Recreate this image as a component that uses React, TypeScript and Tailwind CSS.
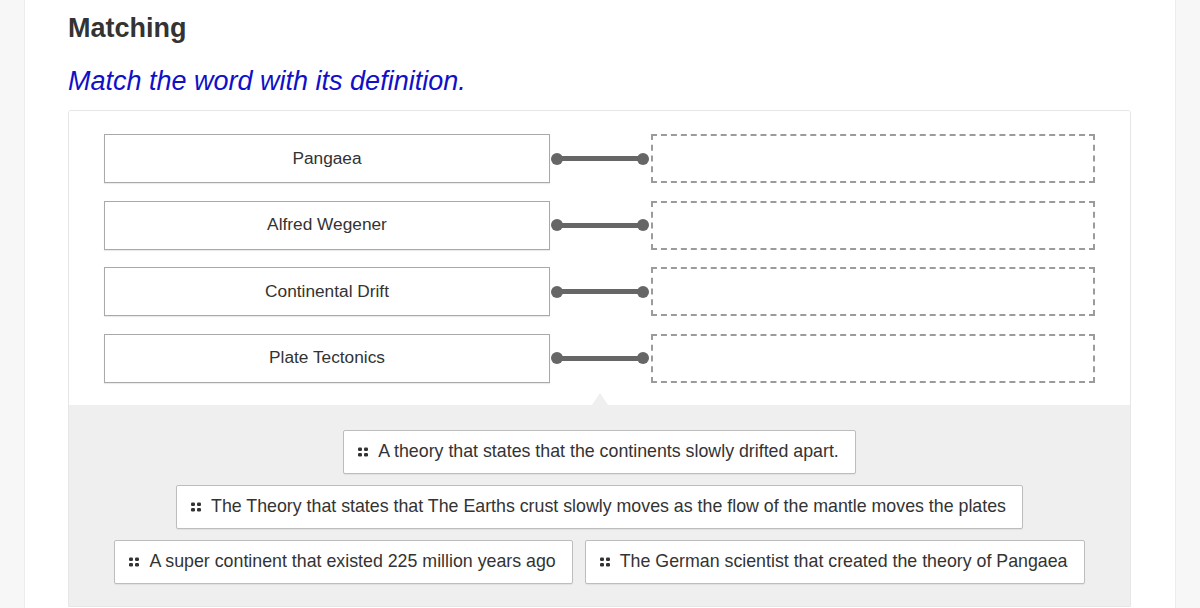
import React from "react";

const words = ["Pangaea", "Alfred Wegener", "Continental Drift", "Plate Tectonics"];

const definitions = [
  "A theory that states that the continents slowly drifted apart.",
  "The Theory that states that The Earths crust slowly moves as the flow of the mantle moves the plates",
  "A super continent that existed 225 million years ago",
  "The German scientist that created the theory of Pangaea",
];

const Grip = () => (
  <svg width="10" height="10" viewBox="0 0 10 10" aria-hidden="true" className="shrink-0">
    <rect x="0" y="0.5" width="4" height="3.5" rx="1.2" fill="#333" />
    <rect x="6" y="0.5" width="4" height="3.5" rx="1.2" fill="#333" />
    <rect x="0" y="6" width="4" height="3.5" rx="1.2" fill="#333" />
    <rect x="6" y="6" width="4" height="3.5" rx="1.2" fill="#333" />
  </svg>
);

const MatchRow = ({ word }: { word: string }) => (
  <div className="flex items-center h-[49px]">
    <div className="flex h-full w-[446px] shrink-0 items-center justify-center border border-[#a9a9a9] bg-white text-[17.3px] text-[#333] shadow-[0_1px_1px_rgba(0,0,0,0.08)]">
      {word}
    </div>
    <div className="relative flex w-[101px] shrink-0 items-center pl-[1px] pr-[2px]">
      <span className="h-[12px] w-[12px] shrink-0 rounded-full bg-[#666]" />
      <span className="-mx-[2px] h-[5px] flex-1 bg-[#666]" />
      <span className="h-[12px] w-[12px] shrink-0 rounded-full bg-[#666]" />
    </div>
    <div className="h-full w-[444px] shrink-0 border-2 border-dashed border-[#9b9b9b]" />
  </div>
);

export default function App() {
  return (
    <div className="flex min-h-[608px] w-full bg-[#f7f7f7] font-['Liberation_Sans',Arial,sans-serif]">
      <div className="w-[25px] shrink-0 border-r border-[#ececec]" />
      <main className="w-[1150px] shrink-0 bg-white pl-[43px] pr-[44px] pt-[12px]">
        <h2 className="text-[27px] font-bold leading-[32px] text-[#333]">Matching</h2>
        <p className="mt-[21px] text-[27px] italic leading-[32px] text-[#1010c8]">
          Match the word with its definition.
        </p>
        <section className="mt-[13px] overflow-hidden rounded-t-[3px] border border-[#e6e6e6]">
          <div className="flex flex-col gap-[17.5px] bg-white px-[35px] pb-[22px] pt-[23px]">
            {words.map((word) => (
              <MatchRow key={word} word={word} />
            ))}
          </div>
          <div className="relative bg-[#efefef] px-[20px] pb-[22px] pt-[25px]">
            <span className="absolute -top-[12px] left-[523px] h-0 w-0 border-x-[8px] border-b-[12px] border-x-transparent border-b-[#efefef]" />
            <div className="flex flex-wrap justify-center gap-x-[12px] gap-y-[11px]">
              {definitions.map((text) => (
                <div
                  key={text}
                  className="flex h-[44px] items-center gap-[10px] rounded-[2px] border border-[#bdbdbd] bg-white pl-[14px] pr-[16px] text-[17.8px] text-[#333] shadow-[0_1px_1px_rgba(0,0,0,0.06)]"
                >
                  <Grip />
                  <span className="whitespace-nowrap">{text}</span>
                </div>
              ))}
            </div>
          </div>
        </section>
      </main>
      <div className="flex-1 border-l border-[#ececec]" />
    </div>
  );
}
